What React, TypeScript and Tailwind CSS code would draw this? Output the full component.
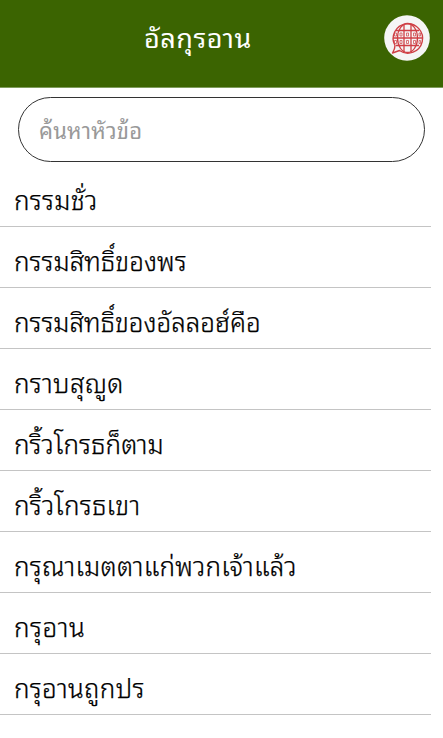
const items = [
  { text: 'กรรมชั่ว', tracking: 'tracking-[0.3px]' },
  { text: 'กรรมสิทธิ์ของพร', tracking: 'tracking-[0.04px]' },
  { text: 'กรรมสิทธิ์ของอัลลอฮ์คือ', tracking: 'tracking-normal' },
  { text: 'กราบสุญูด', tracking: 'tracking-[0.35px]' },
  { text: 'กริ้วโกรธก็ตาม', tracking: 'tracking-[0.1px]' },
  { text: 'กริ้วโกรธเขา', tracking: 'tracking-[0.25px]' },
  { text: 'กรุณาเมตตาแก่พวกเจ้าแล้ว', tracking: 'tracking-[0.25px]' },
  { text: 'กรุอาน', tracking: 'tracking-[0.6px]' },
  { text: 'กรุอานถูกปร', tracking: 'tracking-[0.35px]' },
];

function GlobeBubble() {
  return (
    <svg viewBox="0 0 46 46" className="size-[46px]" fill="none" stroke="#cf3f45">
      <circle cx="23" cy="23" r="22.8" fill="#f5f5f5" stroke="none" />
      <path d="M11 30.5A14.7 14.7 0 1 1 15.5 35.5L8.5 38Q11 34 11 30.5Z" strokeWidth="1.4" strokeLinejoin="round" />
      <path d="M20 8.8V37M27 8.8V37M12 15.5H35M9 23H38M12 30.5H35" strokeWidth="1.3" />
      <ellipse cx="23.5" cy="23" rx="10" ry="14.5" strokeWidth="1.3" />
      <path d="M10.5 18h2v3h-2zM16 18h2v3h-2zM22.5 18h2v3h-2zM29.5 18h2v3h-2zM35 18h1.5v3H35zM10.5 25.5h2v3h-2zM16 25.5h2v3h-2zM22.5 25.5h2v3h-2zM29.5 25.5h2v3h-2zM35 25.5h1.5v3H35z" strokeWidth="0.7" />
    </svg>
  );
}

export default function App() {
  return (
    <div className="h-[738px] w-[443px] overflow-hidden bg-white font-['Noto_Sans_Thai_Looped','Noto_Sans',sans-serif] text-black">
      <header className="flex h-[88px] items-center justify-between border-b border-[#7f9c5c] bg-[#3b6401] pr-[13px] pb-[11px] pl-[144px] text-white">
        <h1 className="-mt-[6px] text-[27px] leading-none font-normal tracking-[0.5px]">อัลกุรอาน</h1>
        <GlobeBubble />
      </header>
      <input
        aria-label="ค้นหาหัวข้อ"
        placeholder="ค้นหาหัวข้อ"
        className="mx-[18px] mt-[9px] block h-[65px] w-[407px] rounded-full border border-[#333] px-5 pb-[1px] text-[22px] tracking-[0.2px] placeholder:text-[#999]"
      />
      <ul className="mt-[4px]">
        {items.map((item) => (
          <li key={item.text} className={`flex h-[61px] w-[431px] items-center border-b border-[#c4c4c4] pt-[4px] pl-[14px] text-[26px] font-[350] [-webkit-text-stroke:0.25px_black] ${item.tracking}`}>
            {item.text}
          </li>
        ))}
      </ul>
    </div>
  );
}
